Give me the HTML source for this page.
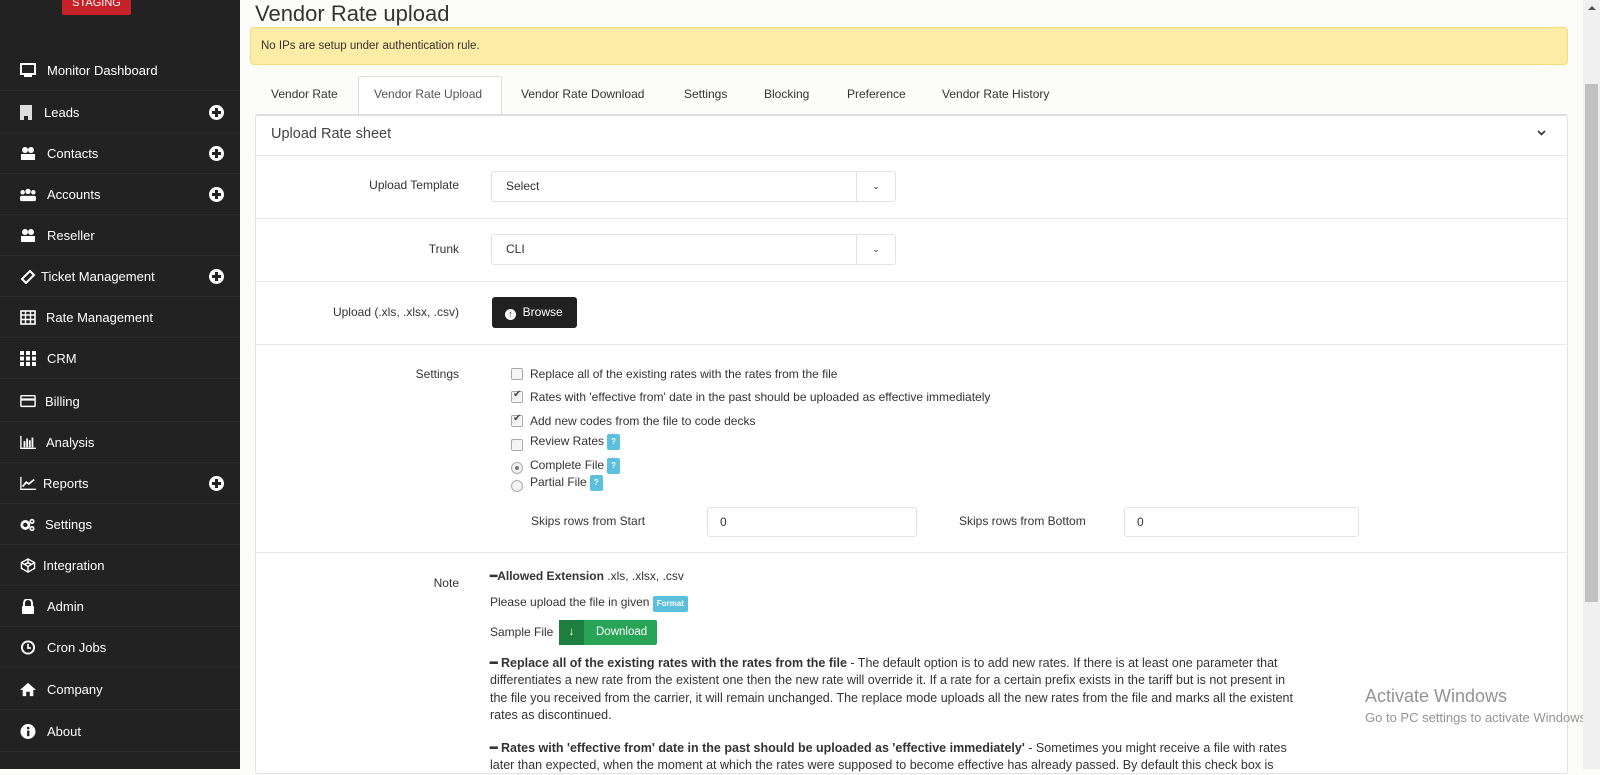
<!DOCTYPE html>
<html><head><meta charset="utf-8"><style>
*{box-sizing:border-box;margin:0;padding:0}
body{width:1600px;height:769px;overflow:hidden;background:#fcfcfb;font-family:"Liberation Sans",sans-serif;font-size:12px;color:#333;position:relative}
.abs{position:absolute}
#side{left:0;top:0;width:240px;height:769px;background:#222}
.badge{left:62px;top:-8px;width:69px;height:23px;background:#c62127;color:#fff;font-size:11px;text-align:center;line-height:14px;padding-top:4px;border-radius:2px}
.item{position:absolute;left:0;width:240px;height:41px;border-bottom:1px solid #2c2c2c;color:#fff;font-size:13px;line-height:41px}
.item .ic{position:absolute;left:20px;top:13px;width:16px;height:15px}
.item .t{position:absolute;left:47px}
.plus{position:absolute;left:209px;top:13px;width:15px;height:15px;border-radius:50%;background:#fff}
.plus:before{content:"";position:absolute;left:3px;top:6px;width:9px;height:3px;background:#222}
.plus:after{content:"";position:absolute;left:6px;top:3px;width:3px;height:9px;background:#222}
.lbl{position:absolute;text-align:right;width:200px;left:259px}
.sel{position:absolute;left:491px;width:405px;height:31px;border:1px solid #e2e2e2;border-radius:3px;background:#fff;padding-left:14px;line-height:29px;font-size:12px}
.sel .car{position:absolute;right:0;top:0;width:39px;height:29px;border-left:1px solid #e2e2e2;text-align:center;font-size:9px}
.row{position:absolute;left:255px;width:1313px;border-top:1px solid #e8e8e8}
.cb{position:absolute;left:511px;width:12px;height:12px;border:1px solid #aaa;border-radius:2px;background:#f4f4f4}
.cb.on:after{content:"✔";position:absolute;left:1px;top:-3px;font-size:10px;color:#444}
.rd{position:absolute;left:511px;width:12px;height:12px;border:1px solid #aaa;border-radius:50%;background:#f2f2f2}
.rd.on:after{content:"";position:absolute;left:3px;top:3px;width:4px;height:4px;border-radius:50%;background:#777}
.q{display:inline-block;width:13px;height:16px;background:#5bc0de;color:#fff;font-size:8px;font-weight:bold;text-align:center;line-height:16px;border-radius:2px;vertical-align:middle;margin-left:3px}
.ct{position:absolute;left:530px;white-space:nowrap}
.inp{position:absolute;height:30px;border:1px solid #e2e2e2;border-radius:3px;background:#fff;padding-left:12px;line-height:28px}
.note{position:absolute;left:490px;white-space:nowrap;font-size:12px;color:#333}
.np{font-size:12.5px}
</style></head><body>
<div id="side" class="abs">
<div class="abs badge">STAGING</div>
<div class="item" style="top:50px"><svg class="ic" viewBox="0 0 16 15"><rect x="1" y="1" width="14" height="10" fill="none" stroke="#fff" stroke-width="2"/><rect x="4" y="12" width="8" height="2" fill="#fff"/></svg><span class="t">Monitor Dashboard</span></div>
<div class="item" style="top:92px"><svg class="ic" viewBox="0 0 16 15"><rect x="0" y="0" width="12" height="15" fill="#ddd"/><rect x="4" y="11" width="4" height="4" fill="#222"/></svg><span class="t" style="left:44px">Leads</span><div class="plus"></div></div>
<div class="item" style="top:133px"><svg class="ic" viewBox="0 0 16 15"><circle cx="5" cy="4" r="3" fill="#fff"/><circle cx="11" cy="4" r="3" fill="#fff"/><rect x="1" y="8" width="8" height="6" fill="#fff"/><rect x="8" y="8" width="7" height="6" fill="#fff"/></svg><span class="t">Contacts</span><div class="plus"></div></div>
<div class="item" style="top:174px"><svg class="ic" viewBox="0 0 18 15"><circle cx="9" cy="4" r="3" fill="#fff"/><circle cx="3" cy="5" r="2.5" fill="#fff"/><circle cx="15" cy="5" r="2.5" fill="#fff"/><rect x="0" y="9" width="18" height="6" rx="2" fill="#fff"/></svg><span class="t">Accounts</span><div class="plus"></div></div>
<div class="item" style="top:215px"><svg class="ic" viewBox="0 0 16 15"><circle cx="5" cy="4" r="3" fill="#fff"/><circle cx="11" cy="4" r="3" fill="#fff"/><rect x="1" y="8" width="8" height="6" fill="#fff"/><rect x="8" y="8" width="7" height="6" fill="#fff"/></svg><span class="t">Reseller</span></div>
<div class="item" style="top:256px"><svg class="ic" viewBox="0 0 16 15"><path d="M2 10 L10 2 L14 6 L6 14 Z" fill="none" stroke="#fff" stroke-width="2"/></svg><span class="t" style="left:41px">Ticket Management</span><div class="plus"></div></div>
<div class="item" style="top:297px"><svg class="ic" viewBox="0 0 16 15"><rect x="1" y="1" width="14" height="13" fill="none" stroke="#fff" stroke-width="1.6"/><path d="M1 5H15M1 9.5H15M5.5 1V14M10.5 1V14" stroke="#fff" stroke-width="1.4"/></svg><span class="t" style="left:46px">Rate Management</span></div>
<div class="item" style="top:338px"><svg class="ic" viewBox="0 0 16 15"><g fill="#fff"><rect x="0" y="0" width="4" height="4"/><rect x="6" y="0" width="4" height="4"/><rect x="12" y="0" width="4" height="4"/><rect x="0" y="5.5" width="4" height="4"/><rect x="6" y="5.5" width="4" height="4"/><rect x="12" y="5.5" width="4" height="4"/><rect x="0" y="11" width="4" height="4"/><rect x="6" y="11" width="4" height="4"/><rect x="12" y="11" width="4" height="4"/></g></svg><span class="t">CRM</span></div>
<div class="item" style="top:381px"><svg class="ic" viewBox="0 0 18 15"><rect x="1" y="1" width="16" height="12" rx="1" fill="none" stroke="#fff" stroke-width="1.6"/><rect x="1" y="4" width="16" height="2.5" fill="#fff"/></svg><span class="t" style="left:45px">Billing</span></div>
<div class="item" style="top:422px"><svg class="ic" viewBox="0 0 18 15"><path d="M1 0V14H18" fill="none" stroke="#fff" stroke-width="1.5"/><g fill="#fff"><rect x="4" y="6" width="2" height="7"/><rect x="7" y="3" width="2" height="10"/><rect x="10" y="5" width="2" height="8"/><rect x="13" y="2" width="2" height="11"/></g></svg><span class="t" style="left:46px">Analysis</span></div>
<div class="item" style="top:463px"><svg class="ic" viewBox="0 0 18 15"><path d="M1 0V14H18" fill="none" stroke="#fff" stroke-width="1.5"/><path d="M3 11L7 6L10 8L16 3" fill="none" stroke="#fff" stroke-width="2"/></svg><span class="t" style="left:43px">Reports</span><div class="plus"></div></div>
<div class="item" style="top:504px"><svg class="ic" viewBox="0 0 18 15"><circle cx="6" cy="8" r="4" fill="none" stroke="#fff" stroke-width="3"/><circle cx="13.5" cy="4" r="2" fill="none" stroke="#fff" stroke-width="1.8"/><circle cx="13.5" cy="12" r="2" fill="none" stroke="#fff" stroke-width="1.8"/></svg><span class="t" style="left:45px">Settings</span></div>
<div class="item" style="top:545px"><svg class="ic" viewBox="0 0 16 16"><path d="M8 1L15 5V11L8 15L1 11V5Z M1 5L8 9L15 5 M8 9V15 M8 1V5 M4 7L8 5L12 7" fill="none" stroke="#fff" stroke-width="1.5"/></svg><span class="t" style="left:43px">Integration</span></div>
<div class="item" style="top:586px"><svg class="ic" viewBox="0 0 16 15"><path d="M4 7V4a4 4 0 0 1 8 0v3" fill="none" stroke="#fff" stroke-width="2"/><rect x="2" y="7" width="12" height="8" fill="#fff"/></svg><span class="t">Admin</span></div>
<div class="item" style="top:627px"><svg class="ic" viewBox="0 0 16 16"><circle cx="8" cy="8" r="6.5" fill="none" stroke="#fff" stroke-width="2"/><path d="M8 4V8.5H11" fill="none" stroke="#fff" stroke-width="1.8"/></svg><span class="t">Cron Jobs</span></div>
<div class="item" style="top:669px"><svg class="ic" viewBox="0 0 18 15"><path d="M9 0L18 8H15V15H11V10H7V15H3V8H0Z" fill="#fff"/></svg><span class="t">Company</span></div>
<div class="item" style="top:711px"><svg class="ic" viewBox="0 0 16 16"><circle cx="8" cy="8" r="8" fill="#fff"/><rect x="7" y="7" width="2.5" height="6" fill="#222"/><circle cx="8.2" cy="4.3" r="1.4" fill="#222"/></svg><span class="t">About</span></div>
</div>

<div class="abs" style="left:255px;top:1px;font-size:22px;color:#333;line-height:26px">Vendor Rate upload</div>
<div class="abs" style="left:250px;top:27px;width:1318px;height:38px;background:#fdeca6;border:1px solid #f7d87c;border-radius:4px;padding-left:10px;line-height:36px;font-size:11.5px">No IPs are setup under authentication rule.</div>

<div class="abs" style="left:358px;top:76px;width:144px;height:40px;background:#fff;border:1px solid #ddd;border-bottom:none;border-radius:3px 3px 0 0"></div>
<div class="abs" style="top:87px;left:271px;font-size:12px;line-height:14px;white-space:nowrap">Vendor Rate</div>
<div class="abs" style="top:87px;left:374px;font-size:12px;line-height:14px;white-space:nowrap;color:#555">Vendor Rate Upload</div>
<div class="abs" style="top:87px;left:521px;font-size:12px;line-height:14px;white-space:nowrap">Vendor Rate Download</div>
<div class="abs" style="top:87px;left:684px;font-size:12px;line-height:14px">Settings</div>
<div class="abs" style="top:87px;left:764px;font-size:12px;line-height:14px">Blocking</div>
<div class="abs" style="top:87px;left:847px;font-size:12px;line-height:14px">Preference</div>
<div class="abs" style="top:87px;left:942px;font-size:12px;line-height:14px;white-space:nowrap">Vendor Rate History</div>

<div class="abs" style="left:255px;top:114px;width:1313px;height:660px;background:#fff;border:1px solid #e3e3e3;border-top:2px solid #ddd;border-radius:3px"></div>
<div class="abs" style="left:271px;top:126px;font-size:14.5px;color:#444">Upload Rate sheet</div>
<svg class="abs" style="left:1537px;top:130px" width="9" height="6" viewBox="0 0 9 6"><path d="M1 1L4.5 4.5L8 1" fill="none" stroke="#333" stroke-width="1.6"/></svg>

<div class="row" style="top:155px;height:1px"></div>
<div class="lbl" style="top:178px">Upload Template</div>
<div class="sel" style="top:171px">Select<div class="car">&#8964;</div></div>
<div class="row" style="top:218px;height:1px"></div>
<div class="lbl" style="top:242px">Trunk</div>
<div class="sel" style="top:234px">CLI<div class="car">&#8964;</div></div>
<div class="row" style="top:281px;height:1px"></div>
<div class="lbl" style="top:305px">Upload (.xls, .xlsx, .csv)</div>
<div class="abs" style="left:492px;top:297px;width:85px;height:31px;background:#212121;border-radius:3px;color:#fff;font-size:12px;line-height:31px;padding-left:13px"><span style="display:inline-block;width:11px;height:11px;border-radius:50%;background:#fff;color:#212121;font-size:9px;line-height:11px;text-align:center;vertical-align:-1px;font-weight:bold">↑</span>&nbsp; Browse</div>
<div class="row" style="top:344px;height:1px"></div>

<div class="lbl" style="top:367px">Settings</div>
<div class="cb" style="top:368px"></div><div class="ct" style="top:367px">Replace all of the existing rates with the rates from the file</div>
<div class="cb on" style="top:391px"></div><div class="ct" style="top:390px">Rates with 'effective from' date in the past should be uploaded as effective immediately</div>
<div class="cb on" style="top:415px"></div><div class="ct" style="top:414px">Add new codes from the file to code decks</div>
<div class="cb" style="top:439px"></div><div class="ct" style="top:434px">Review Rates<span class="q">?</span></div>
<div class="rd on" style="top:462px"></div><div class="ct" style="top:458px">Complete File<span class="q">?</span></div>
<div class="rd" style="top:480px"></div><div class="ct" style="top:475px">Partial File<span class="q">?</span></div>
<div class="abs" style="left:531px;top:514px">Skips rows from Start</div>
<div class="inp" style="left:707px;top:507px;width:210px">0</div>
<div class="abs" style="left:959px;top:514px">Skips rows from Bottom</div>
<div class="inp" style="left:1124px;top:507px;width:235px">0</div>
<div class="row" style="top:552px;height:1px"></div>

<div class="lbl" style="top:576px">Note</div>
<div class="note" style="top:569px"><b>━Allowed Extension</b> .xls, .xlsx, .csv</div>
<div class="note" style="top:595px">Please upload the file in given <span style="display:inline-block;background:#5bc0de;color:#fff;font-size:8px;font-weight:bold;padding:0 4px;line-height:16px;border-radius:2px">Format</span></div>
<div class="note" style="top:625px">Sample File</div>
<div class="abs" style="left:559px;top:620px;width:98px;height:25px;background:#27a456;border-radius:2px;color:#fff;line-height:25px;font-size:11.5px"><span style="display:inline-block;width:25px;height:25px;background:#1e7e40;text-align:center;font-weight:bold">↓</span><span style="margin-left:12px">Download</span></div>
<div class="note np" style="top:655px;line-height:17.3px"><b>━ Replace all of the existing rates with the rates from the file</b> - The default option is to add new rates. If there is at least one parameter that<br>differentiates a new rate from the existent one then the new rate will override it. If a rate for a certain prefix exists in the tariff but is not present in<br>the file you received from the carrier, it will remain unchanged. The replace mode uploads all the new rates from the file and marks all the existent<br>rates as discontinued.</div>
<div class="note np" style="top:740px;line-height:17.3px"><b>━ Rates with 'effective from' date in the past should be uploaded as 'effective immediately'</b> - Sometimes you might receive a file with rates<br>later than expected, when the moment at which the rates were supposed to become effective has already passed. By default this check box is</div>

<div class="abs" style="left:1365px;top:686px;font-size:18px;color:rgba(120,120,120,.8);white-space:nowrap">Activate Windows</div>
<div class="abs" style="left:1365px;top:710px;font-size:13px;color:rgba(120,120,120,.8);white-space:nowrap">Go to PC settings to activate Windows.</div>

<div class="abs" style="left:1583px;top:0;width:17px;height:769px;background:#f0f0f0"></div>
<div class="abs" style="left:1585px;top:84px;width:13px;height:518px;background:#c1c1c1"></div>
<div class="abs" style="left:1588px;top:6px;width:0;height:0;border-left:4px solid transparent;border-right:4px solid transparent;border-bottom:4px solid #505050"></div>
</body></html>
